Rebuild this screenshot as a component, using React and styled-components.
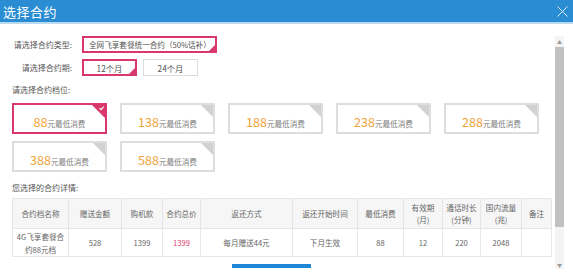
import React from 'react';
import styled, { createGlobalStyle } from 'styled-components';

const GlobalStyle = createGlobalStyle`
  html, body {
    margin: 0;
    padding: 0;
    background: #fff;
    font-family: "Noto Sans CJK SC", "Noto Sans", sans-serif;
  }
  #root {
    width: 573px;
    height: 278px;
    overflow: hidden;
  }
`;

const PINK = '#d9386c';

const Dialog = styled.div`
  width: 573px;
  height: 278px;
  display: flex;
  flex-direction: column;
  background: #fff;
`;

const Header = styled.div`
  height: 22px;
  flex: none;
  background: #2a8dd4;
  border-bottom: 2px solid #b8dbf2;
  display: flex;
  align-items: center;
  justify-content: space-between;
  padding: 0 5px 0 3px;
`;

const Title = styled.h1`
  margin: 0;
  font-size: 13px;
  font-weight: 400;
  color: #fff;
  letter-spacing: 0.5px;
`;

const Close = styled.button`
  border: none;
  background: none;
  padding: 0;
  width: 11px;
  height: 11px;
  display: flex;
  cursor: pointer;
`;

const Body = styled.div`
  flex: 1;
  display: flex;
  min-height: 0;
`;

const Main = styled.div`
  width: 551px;
  padding: 12px 0 0 12px;
  box-sizing: border-box;
  display: flex;
  flex-direction: column;
`;

const Row = styled.div`
  display: flex;
  align-items: center;
  gap: 6px;
  margin-bottom: ${({ mb }) => mb || 0}px;
`;

const Label = styled.span`
  width: 60px;
  margin-right: 4px;
  text-align: right;
  font-size: 8px;
  color: #555;
  white-space: nowrap;
`;

const Option = styled.div`
  position: relative;
  box-sizing: border-box;
  height: 17px;
  width: ${({ w }) => w}px;
  padding: ${({ left }) => (left ? '0 0 0 5px' : '0')};
  display: flex;
  align-items: center;
  justify-content: ${({ left }) => (left ? 'flex-start' : 'center')};
  font-size: ${({ left }) => (left ? 7.6 : 8.3)}px;
  color: #555;
  white-space: nowrap;
  overflow: hidden;
  border: ${({ active }) => (active ? `2px solid ${PINK}` : '1px solid #dcdcdc')};

  &::after {
    content: '';
    display: ${({ active }) => (active ? 'block' : 'none')};
    position: absolute;
    right: 0;
    bottom: 0;
    width: 6px;
    height: 6px;
    background: ${PINK};
    clip-path: polygon(100% 0, 100% 100%, 0 100%);
  }
`;

const Section = styled.div`
  font-size: 8px;
  color: #555;
  margin: ${({ m }) => m};
`;

const Grid = styled.div`
  display: grid;
  grid-template-columns: repeat(5, 95px);
  column-gap: 13px;
  row-gap: 7px;
`;

const Card = styled.div`
  position: relative;
  box-sizing: border-box;
  height: 31px;
  display: flex;
  align-items: baseline;
  justify-content: center;
  padding-top: 7px;
  border: 2px solid ${({ active }) => (active ? PINK : '#dedede')};
  overflow: hidden;
`;

const Corner = styled.span`
  position: absolute;
  top: 0;
  right: 0;
  width: ${({ active }) => (active ? 13 : 12)}px;
  height: ${({ active }) => (active ? 13 : 12)}px;
  background: ${({ active }) => (active ? PINK : '#d2d2d2')};
  clip-path: polygon(0 0, 100% 0, 100% 100%);
  display: flex;
  justify-content: flex-end;
`;

const Price = styled.span`
  font-size: 12.5px;
  color: #f0a43c;
`;

const Unit = styled.span`
  font-size: 7.6px;
  color: #808080;
`;

const Table = styled.table`
  width: 539px;
  table-layout: fixed;
  border-collapse: collapse;
  font-size: 7.6px;
  color: #666;
  text-align: center;
`;

const Th = styled.th`
  height: 29px;
  font-weight: 400;
  background: #f6f6f6;
  border: 1px solid #e6e6e6;
  padding: 0 2px;
  line-height: 12px;
`;

const Td = styled.td`
  height: 27px;
  border: 1px solid #e6e6e6;
  padding: 0 2px;
  line-height: 13px;
  color: ${({ hl }) => (hl ? PINK : '#666')};
`;

const Footer = styled.div`
  display: flex;
  justify-content: center;
  padding: 7px 0 0 0;
  margin-left: -20px;
`;

const BlueBar = styled.div`
  width: 79px;
  height: 4px;
  background: #1e88d6;
`;

const ScrollTrack = styled.div`
  width: 9px;
  margin: 12px 0 0 4px;
  height: 233px;
  background: #f4f4f4;
  display: flex;
  flex-direction: column;
  align-items: center;
`;

const Arrow = styled.div`
  height: 10px;
  flex: none;
  display: flex;
  align-items: center;
  justify-content: center;
  font-size: 5px;
  color: #999;
  line-height: 1;
`;

const Thumb = styled.div`
  width: 9px;
  height: 180px;
  margin-top: 1px;
  background: #c1c1c1;
`;

const Spacer = styled.div`
  flex: 1;
`;

const levels = [88, 138, 188, 238, 288, 388, 588];

const heads = [
  ['合约档名称'],
  ['赠送金额'],
  ['购机款'],
  ['合约总价'],
  ['返还方式'],
  ['返还开始时间'],
  ['最低消费'],
  ['有效期', '(月)'],
  ['通话时长', '(分钟)'],
  ['国内流量', '(兆)'],
  ['备注'],
];

const widths = [56, 53, 41, 38, 92, 65, 46, 39, 38, 41, 30];

const rowData = [
  { v: ['4G飞享套餐合', '约88元档'] },
  { v: ['528'] },
  { v: ['1399'] },
  { v: ['1399'], hl: true },
  { v: ['每月赠送44元'] },
  { v: ['下月生效'] },
  { v: ['88'] },
  { v: ['12'] },
  { v: ['220'] },
  { v: ['2048'] },
  { v: [''] },
];

const Lines = ({ parts }) =>
  parts.map((p, i) => (
    <React.Fragment key={i}>
      {i > 0 && <br />}
      {p}
    </React.Fragment>
  ));

function App() {
  return (
    <>
      <GlobalStyle />
      <Dialog>
        <Header>
          <Title>选择合约</Title>
          <Close aria-label="关闭">
            <svg width="11" height="11" viewBox="0 0 11 11">
              <path d="M0.5 0.5 L10.5 10.5 M10.5 0.5 L0.5 10.5" stroke="#dcecf8" strokeWidth="1" />
            </svg>
          </Close>
        </Header>
        <Body>
          <Main>
            <Row mb={6}>
              <Label>请选择合约类型:</Label>
              <Option w={135} left active>全网飞享套餐统一合约（50%话补）</Option>
            </Row>
            <Row>
              <Label>请选择合约期:</Label>
              <Option w={55} active>12个月</Option>
              <Option w={55}>24个月</Option>
            </Row>
            <Section m="8px 0 8px 0">请选择合约档位:</Section>
            <Grid>
              {levels.map((n, i) => (
                <Card key={n} active={i === 0}>
                  <Price>{n}</Price>
                  <Unit>元最低消费</Unit>
                  <Corner active={i === 0}>
                    {i === 0 && (
                      <svg width="8" height="8" viewBox="0 0 8 8">
                        <path d="M2.5 3.2 L4 4.6 L6.8 1.6" fill="none" stroke="#fff" strokeWidth="1.1" />
                      </svg>
                    )}
                  </Corner>
                </Card>
              ))}
            </Grid>
            <Section m="10px 0 5px 0">您选择的合约详情:</Section>
            <Table>
              <colgroup>
                {widths.map((w, i) => (
                  <col key={i} style={{ width: w }} />
                ))}
              </colgroup>
              <thead>
                <tr>
                  {heads.map((h, i) => (
                    <Th key={i}>
                      <Lines parts={h} />
                    </Th>
                  ))}
                </tr>
              </thead>
              <tbody>
                <tr>
                  {rowData.map((c, i) => (
                    <Td key={i} hl={c.hl}>
                      <Lines parts={c.v} />
                    </Td>
                  ))}
                </tr>
              </tbody>
            </Table>
            <Footer>
              <BlueBar />
            </Footer>
          </Main>
          <ScrollTrack>
            <Arrow>▲</Arrow>
            <Thumb />
            <Spacer />
            <Arrow>▼</Arrow>
          </ScrollTrack>
        </Body>
      </Dialog>
    </>
  );
}

export default App;
